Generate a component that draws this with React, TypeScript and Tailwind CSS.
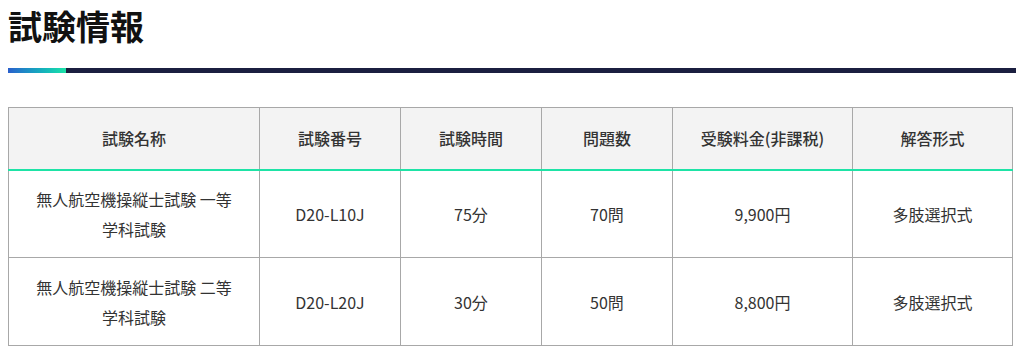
import React from "react";

const cols = [
  { label: "試験名称", w: "w-[251px]" },
  { label: "試験番号", w: "w-[141px]" },
  { label: "試験時間", w: "w-[141px]" },
  { label: "問題数", w: "w-[131px]" },
  { label: "受験料金(非課税)", w: "w-[180px]" },
  { label: "解答形式", w: "w-[160px]" },
];

const rows = [
  ["無人航空機操縦士試験 一等学科試験", "D20-L10J", "75分", "70問", "9,900円", "多肢選択式"],
  ["無人航空機操縦士試験 二等学科試験", "D20-L20J", "30分", "50問", "8,800円", "多肢選択式"],
];

export default function App() {
  return (
    <div
      className="bg-white w-[1024px] h-[363px] px-2 text-[#333]"
      style={{ fontFamily: '"Noto Sans CJK JP", "Noto Sans", sans-serif' }}
    >
      <h1 className="text-[34px] font-bold leading-[51px] text-[#111] m-0">試験情報</h1>
      <div className="mt-[17px] flex h-[5px] w-full">
        <div className="w-[58px] h-full bg-gradient-to-r from-[#2a5fcc] to-[#1ee3a6]" />
        <div className="flex-1 h-full bg-[#1b1f40]" />
      </div>
      <table className="mt-[34px] border-collapse w-[1004px] table-fixed">
        <thead>
          <tr className="bg-[#f3f3f3] h-[62px]">
            {cols.map((c) => (
              <th
                key={c.label}
                className={`${c.w} border border-[#a8a8a8] border-b-2 border-b-[#1ee3a6] text-[16px] font-medium text-[#333] text-center align-middle`}
              >
                {c.label}
              </th>
            ))}
          </tr>
        </thead>
        <tbody>
          {rows.map((r, i) => (
            <tr key={i} className="h-[88px]">
              {r.map((v, j) => (
                <td
                  key={j}
                  className="border border-[#a8a8a8] px-5 text-[16px] leading-[30px] text-center align-middle text-[#333]"
                >
                  {v}
                </td>
              ))}
            </tr>
          ))}
        </tbody>
      </table>
    </div>
  );
}
